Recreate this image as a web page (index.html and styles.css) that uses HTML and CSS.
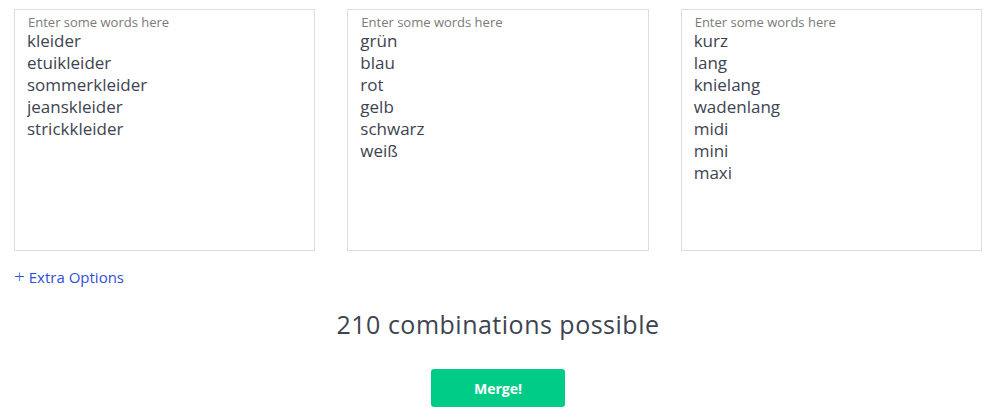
FILE: index.html
```html
<!DOCTYPE html>
<html lang="de">
	<head>
		<meta charset="UTF-8" />
		<meta name="viewport" content="width=device-width, initial-scale=1.0" />
		<title>Word Merger</title>
		<link rel="stylesheet" href="styles.css">
	</head>
	<body>
		<div class="word-columns">
			<div class="word-box">
				<label class="box-label" for="list1">Enter some words here</label>
				<textarea id="list1" class="word-input">kleider
etuikleider
sommerkleider
jeanskleider
strickkleider</textarea>
			</div>
			<div class="word-box">
				<label class="box-label" for="list2">Enter some words here</label>
				<textarea id="list2" class="word-input">grün
blau
rot
gelb
schwarz
weiß</textarea>
			</div>
			<div class="word-box">
				<label class="box-label" for="list3">Enter some words here</label>
				<textarea id="list3" class="word-input">kurz
lang
knielang
wadenlang
midi
mini
maxi</textarea>
			</div>
		</div>

		<a class="extra-link" href="#"><span class="plus">+</span> Extra Options</a>

		<h2 class="combo-count">210 combinations possible</h2>

		<div class="actions">
			<button class="merge-btn">Merge!</button>
		</div>
	</body>
</html>
```

FILE: styles.css
```css
body {
	margin: 0;
	padding: 9px 13px 0 14px;
	font-family: "Open Sans", Arial, sans-serif;
	color: #3d4451;
	background: #fff;
}
.word-columns {
	display: grid;
	grid-template-columns: repeat(3, 1fr);
	gap: 32px;
}
.word-box {
	display: flex;
	flex-direction: column;
	height: 242px;
	border: 1px solid #dcdde3;
	padding: 4px 12px 0 12px;
	box-sizing: border-box;
}
.box-label {
	font-size: 13px;
	line-height: 16px;
	color: #7a7a7a;
	padding-left: 1px;
}
.word-input {
	flex-grow: 1;
	border: none;
	outline: none;
	resize: none;
	padding: 0;
	margin: 0;
	font-family: inherit;
	font-size: 17px;
	line-height: 22px;
	color: #3d4451;
	overflow: hidden;
}
.extra-link {
	display: inline-block;
	margin-top: 15px;
	font-size: 15px;
	line-height: 20px;
	color: #2f4fd8;
	text-decoration: none;
}
.extra-link .plus {
	font-size: 19px;
	font-weight: 300;
}
.combo-count {
	margin: 21px 0 0;
	text-align: center;
	font-size: 25px;
	line-height: 30px;
	font-weight: normal;
	letter-spacing: 0.5px;
}
.actions {
	display: flex;
	justify-content: center;
	margin-top: 30px;
}
.merge-btn {
	width: 134px;
	height: 38px;
	background-color: #00cc88;
	color: white;
	border: none;
	border-radius: 3px;
	font-family: inherit;
	font-size: 14px;
	font-weight: bold;
	cursor: pointer;
}
```
